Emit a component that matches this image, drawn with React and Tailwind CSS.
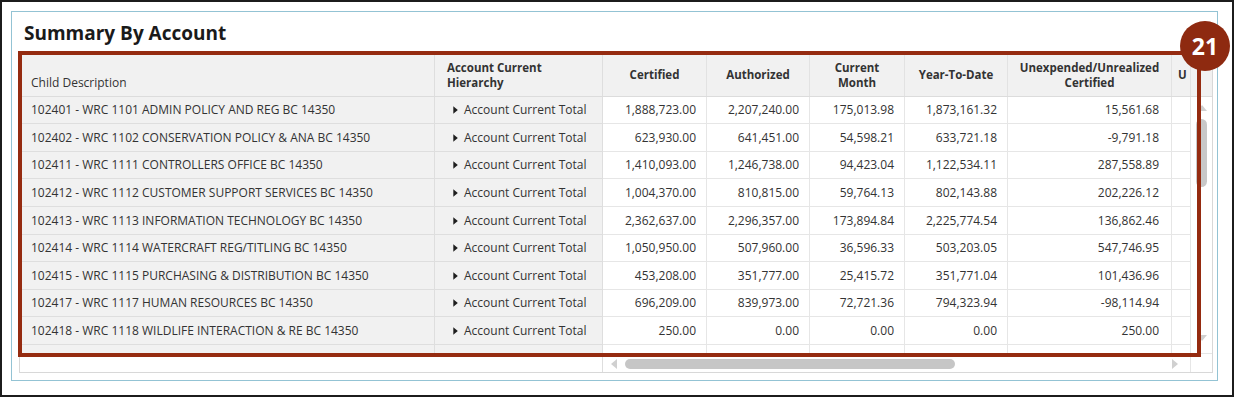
import React from "react";

const rows = [
  ["102401 - WRC 1101 ADMIN POLICY AND REG BC 14350", "1,888,723.00", "2,207,240.00", "175,013.98", "1,873,161.32", "15,561.68"],
  ["102402 - WRC 1102 CONSERVATION POLICY & ANA BC 14350", "623,930.00", "641,451.00", "54,598.21", "633,721.18", "-9,791.18"],
  ["102411 - WRC 1111 CONTROLLERS OFFICE BC 14350", "1,410,093.00", "1,246,738.00", "94,423.04", "1,122,534.11", "287,558.89"],
  ["102412 - WRC 1112 CUSTOMER SUPPORT SERVICES BC 14350", "1,004,370.00", "810,815.00", "59,764.13", "802,143.88", "202,226.12"],
  ["102413 - WRC 1113 INFORMATION TECHNOLOGY BC 14350", "2,362,637.00", "2,296,357.00", "173,894.84", "2,225,774.54", "136,862.46"],
  ["102414 - WRC 1114 WATERCRAFT REG/TITLING BC 14350", "1,050,950.00", "507,960.00", "36,596.33", "503,203.05", "547,746.95"],
  ["102415 - WRC 1115 PURCHASING & DISTRIBUTION BC 14350", "453,208.00", "351,777.00", "25,415.72", "351,771.04", "101,436.96"],
  ["102417 - WRC 1117 HUMAN RESOURCES BC 14350", "696,209.00", "839,973.00", "72,721.36", "794,323.94", "-98,114.94"],
  ["102418 - WRC 1118 WILDLIFE INTERACTION & RE BC 14350", "250.00", "0.00", "0.00", "0.00", "250.00"],
];

const tall = [false, true, false, true, true, false, true, false, true];

const cols = "grid grid-cols-[415px_168px_104px_103px_95px_103px_164px_18px]";

function Caret() {
  return (
    <svg width="5" height="8" viewBox="0 0 5 8" className="shrink-0">
      <path d="M0.3 0.3 L4.8 4 L0.3 7.7 Z" fill="#1e1e1e" />
    </svg>
  );
}

function Arrow({ dir }) {
  const d = {
    up: "M0 6 L5 0 L10 6 Z",
    down: "M0 0 L10 0 L5 6 Z",
    left: "M6 0 L6 10 L0 5 Z",
    right: "M0 0 L6 5 L0 10 Z",
  }[dir];
  const vert = dir === "up" || dir === "down";
  return (
    <svg width={vert ? 10 : 6} height={vert ? 6 : 10} viewBox={vert ? "0 0 10 6" : "0 0 6 10"}>
      <path d={d} fill="#d0d0d0" />
    </svg>
  );
}

function HeaderRow() {
  return (
    <div className="flex h-[44px] bg-[#f1f1f1] border-b border-[#dcdcdc]">
      <div className={cols + " w-[1170px] font-bold text-[11.5px] leading-[15px] text-[#333]"}>
        <div className="flex items-end pb-[6px] pl-[11px] border-r border-[#dedede] font-normal text-[12px]">Child Description</div>
        <div className="flex items-center pl-[12px] border-r border-[#dedede]">Account Current<br />Hierarchy</div>
        <div className="flex items-center justify-center text-center border-r border-[#e2e2e2]">Certified</div>
        <div className="flex items-center justify-center text-center border-r border-[#e2e2e2]">Authorized</div>
        <div className="flex items-center justify-center text-center border-r border-[#e2e2e2]">Current<br />Month</div>
        <div className="flex items-center justify-center text-center border-r border-[#e2e2e2]">Year-To-Date</div>
        <div className="flex items-center justify-center text-center border-r border-[#e2e2e2]">Unexpended/Unrealized<br />Certified</div>
        <div className="flex items-center pl-[6px] overflow-hidden">U</div>
      </div>
      <div className="w-[22px] border-l border-[#e2e2e2]" />
    </div>
  );
}

function BodyRow({ r, h }) {
  return (
    <div className={(h ? "h-[28px]" : "h-[27px]") + " " + cols + " text-[12px] text-[#333]"}>
      <div className="flex items-center pl-[11px] bg-[#f1f1f1] border-r border-b border-[#dedede] whitespace-nowrap">{r[0]}</div>
      <div className="flex items-center gap-[6px] pl-[18px] bg-[#f1f1f1] border-r border-b border-[#dedede] whitespace-nowrap">
        <Caret />
        Account Current Total
      </div>
      {r.slice(1, 6).map((v, i) => (
        <div
          key={i}
          className={(i === 4 ? "pr-[12px]" : "pr-[10px]") + " flex items-center justify-end bg-white border-r border-b border-[#e6e6e6]"}
        >
          {v}
        </div>
      ))}
      <div className="bg-white border-b border-[#e6e6e6]" />
    </div>
  );
}

export default function App() {
  return (
    <div
      className="relative w-[1234px] h-[397px] border-2 border-[#1c1c1c] bg-white"
      style={{ fontFamily: '"Open Sans", "Noto Sans", sans-serif' }}
    >
      <div className="mt-[9px] ml-[9px] w-[1207px] h-[370px] border border-[#93c3d4] pl-[7px] pt-[9px]">
        <h2 className="pl-[5px] text-[19px] leading-[24px] font-bold text-[#1a1a1a]">Summary By Account</h2>

        <div className="mt-[7px] w-[1194px] h-[321px] border border-[#d8d8d8] flex flex-col">
          <HeaderRow />

          <div className="flex">
            <div className="w-[1170px]">
              {rows.map((r, i) => (
                <BodyRow key={i} r={r} h={tall[i]} />
              ))}
              <div className={cols + " h-[8px]"}>
                <div className="bg-[#f1f1f1] border-r border-[#dedede]" />
                <div className="bg-[#f1f1f1] border-r border-[#dedede]" />
                <div className="border-r border-[#e6e6e6]" />
                <div className="border-r border-[#e6e6e6]" />
                <div className="border-r border-[#e6e6e6]" />
                <div className="border-r border-[#e6e6e6]" />
                <div className="border-r border-[#e6e6e6]" />
                <div />
              </div>
            </div>
            {/* vertical scrollbar */}
            <div className="w-[22px] border-l border-[#e6e6e6] flex flex-col items-center pt-[8px]">
              <Arrow dir="up" />
              <div className="mt-[8px] w-[11px] h-[68px] rounded-full bg-[#c8c8c8]" />
              <div className="mt-auto mb-[12px]">
                <Arrow dir="down" />
              </div>
            </div>
          </div>

          {/* horizontal scrollbar row */}
          <div className="flex flex-1 border-t border-[#e6e6e6]">
            <div className="w-[583px] border-r border-[#dedede]" />
            <div className="w-[587px] flex items-center pl-[8px] pr-[12px] pt-[1px]">
              <Arrow dir="left" />
              <div className="ml-[8px] w-[330px] h-[10px] rounded-full bg-[#c6c6c6]" />
              <div className="ml-auto">
                <Arrow dir="right" />
              </div>
            </div>
            <div className="w-[22px] border-l border-[#e6e6e6]" />
          </div>
        </div>
      </div>

      {/* callout frame */}
      <div className="absolute left-[16px] top-[49px] w-[1183px] h-[306px] border-[4px] border-[#952b10] pointer-events-none" />
      <div className="absolute left-[1178px] top-[19px] w-[50px] h-[50px] rounded-full bg-[#8e2a10] flex items-center justify-center text-white font-bold text-[23px] leading-none">
        21
      </div>
    </div>
  );
}
